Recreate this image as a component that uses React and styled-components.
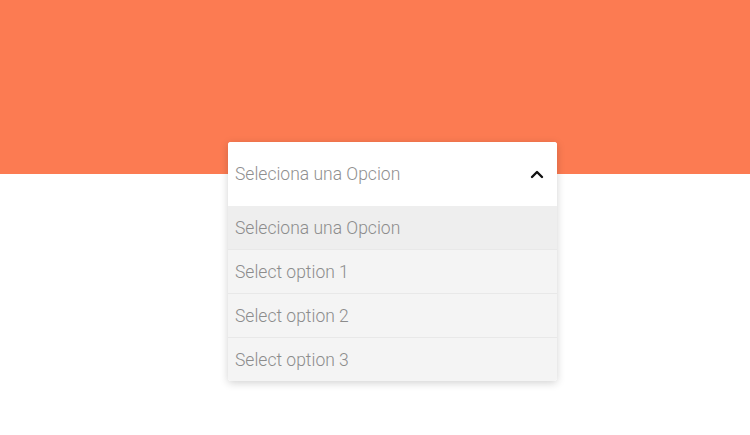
import React from "react";
import styled, { createGlobalStyle } from "styled-components";

const Global = createGlobalStyle`
  html, body { margin: 0; padding: 0; }
  body {
    font-family: Roboto, "Noto Sans", sans-serif;
    background: linear-gradient(#fc7b52 0, #fc7b52 174px, #ffffff 174px);
    min-height: 435px;
  }
`;

const Page = styled.div`
  padding-top: 142px;
  padding-left: 228px;
`;

const Select = styled.div`
  width: 329px;
  box-shadow: 0 2px 8px rgba(0, 0, 0, 0.18);
  border-radius: 3px;
  overflow: hidden;
  background: #fff;
`;

const Header = styled.div`
  height: 64px;
  display: flex;
  align-items: center;
  justify-content: space-between;
  padding: 0 13px 0 7px;
  background: #fff;
  color: #8f8f8f;
  font-size: 17.5px;
  font-weight: 300;
`;

const List = styled.ul`
  list-style: none;
  margin: 0;
  padding: 0;
`;

const Option = styled.li`
  height: 43px;
  display: flex;
  align-items: center;
  padding: 0 7px;
  font-size: 17.5px;
  font-weight: 300;
  color: #8c8c8c;
  background: ${(p) => (p.$active ? "#eeeeee" : "#f4f4f4")};
  border-top: ${(p) => (p.$first ? "none" : "1px solid #e8e8e8")};
`;

const Chevron = () => (
  <svg width="14" height="10" viewBox="0 0 14 10">
    <path d="M2 8 L7 3 L12 8" fill="none" stroke="#111" strokeWidth="2.4" strokeLinecap="round" strokeLinejoin="round" />
  </svg>
);

export default function App() {
  const options = ["Seleciona una Opcion", "Select option 1", "Select option 2", "Select option 3"];
  return (
    <>
      <Global />
      <Page>
        <Select>
          <Header>
            <span>Seleciona una Opcion</span>
            <Chevron />
          </Header>
          <List>
            {options.map((o, i) => (
              <Option key={o} $active={i === 0} $first={i === 0}>{o}</Option>
            ))}
          </List>
        </Select>
      </Page>
    </>
  );
}
